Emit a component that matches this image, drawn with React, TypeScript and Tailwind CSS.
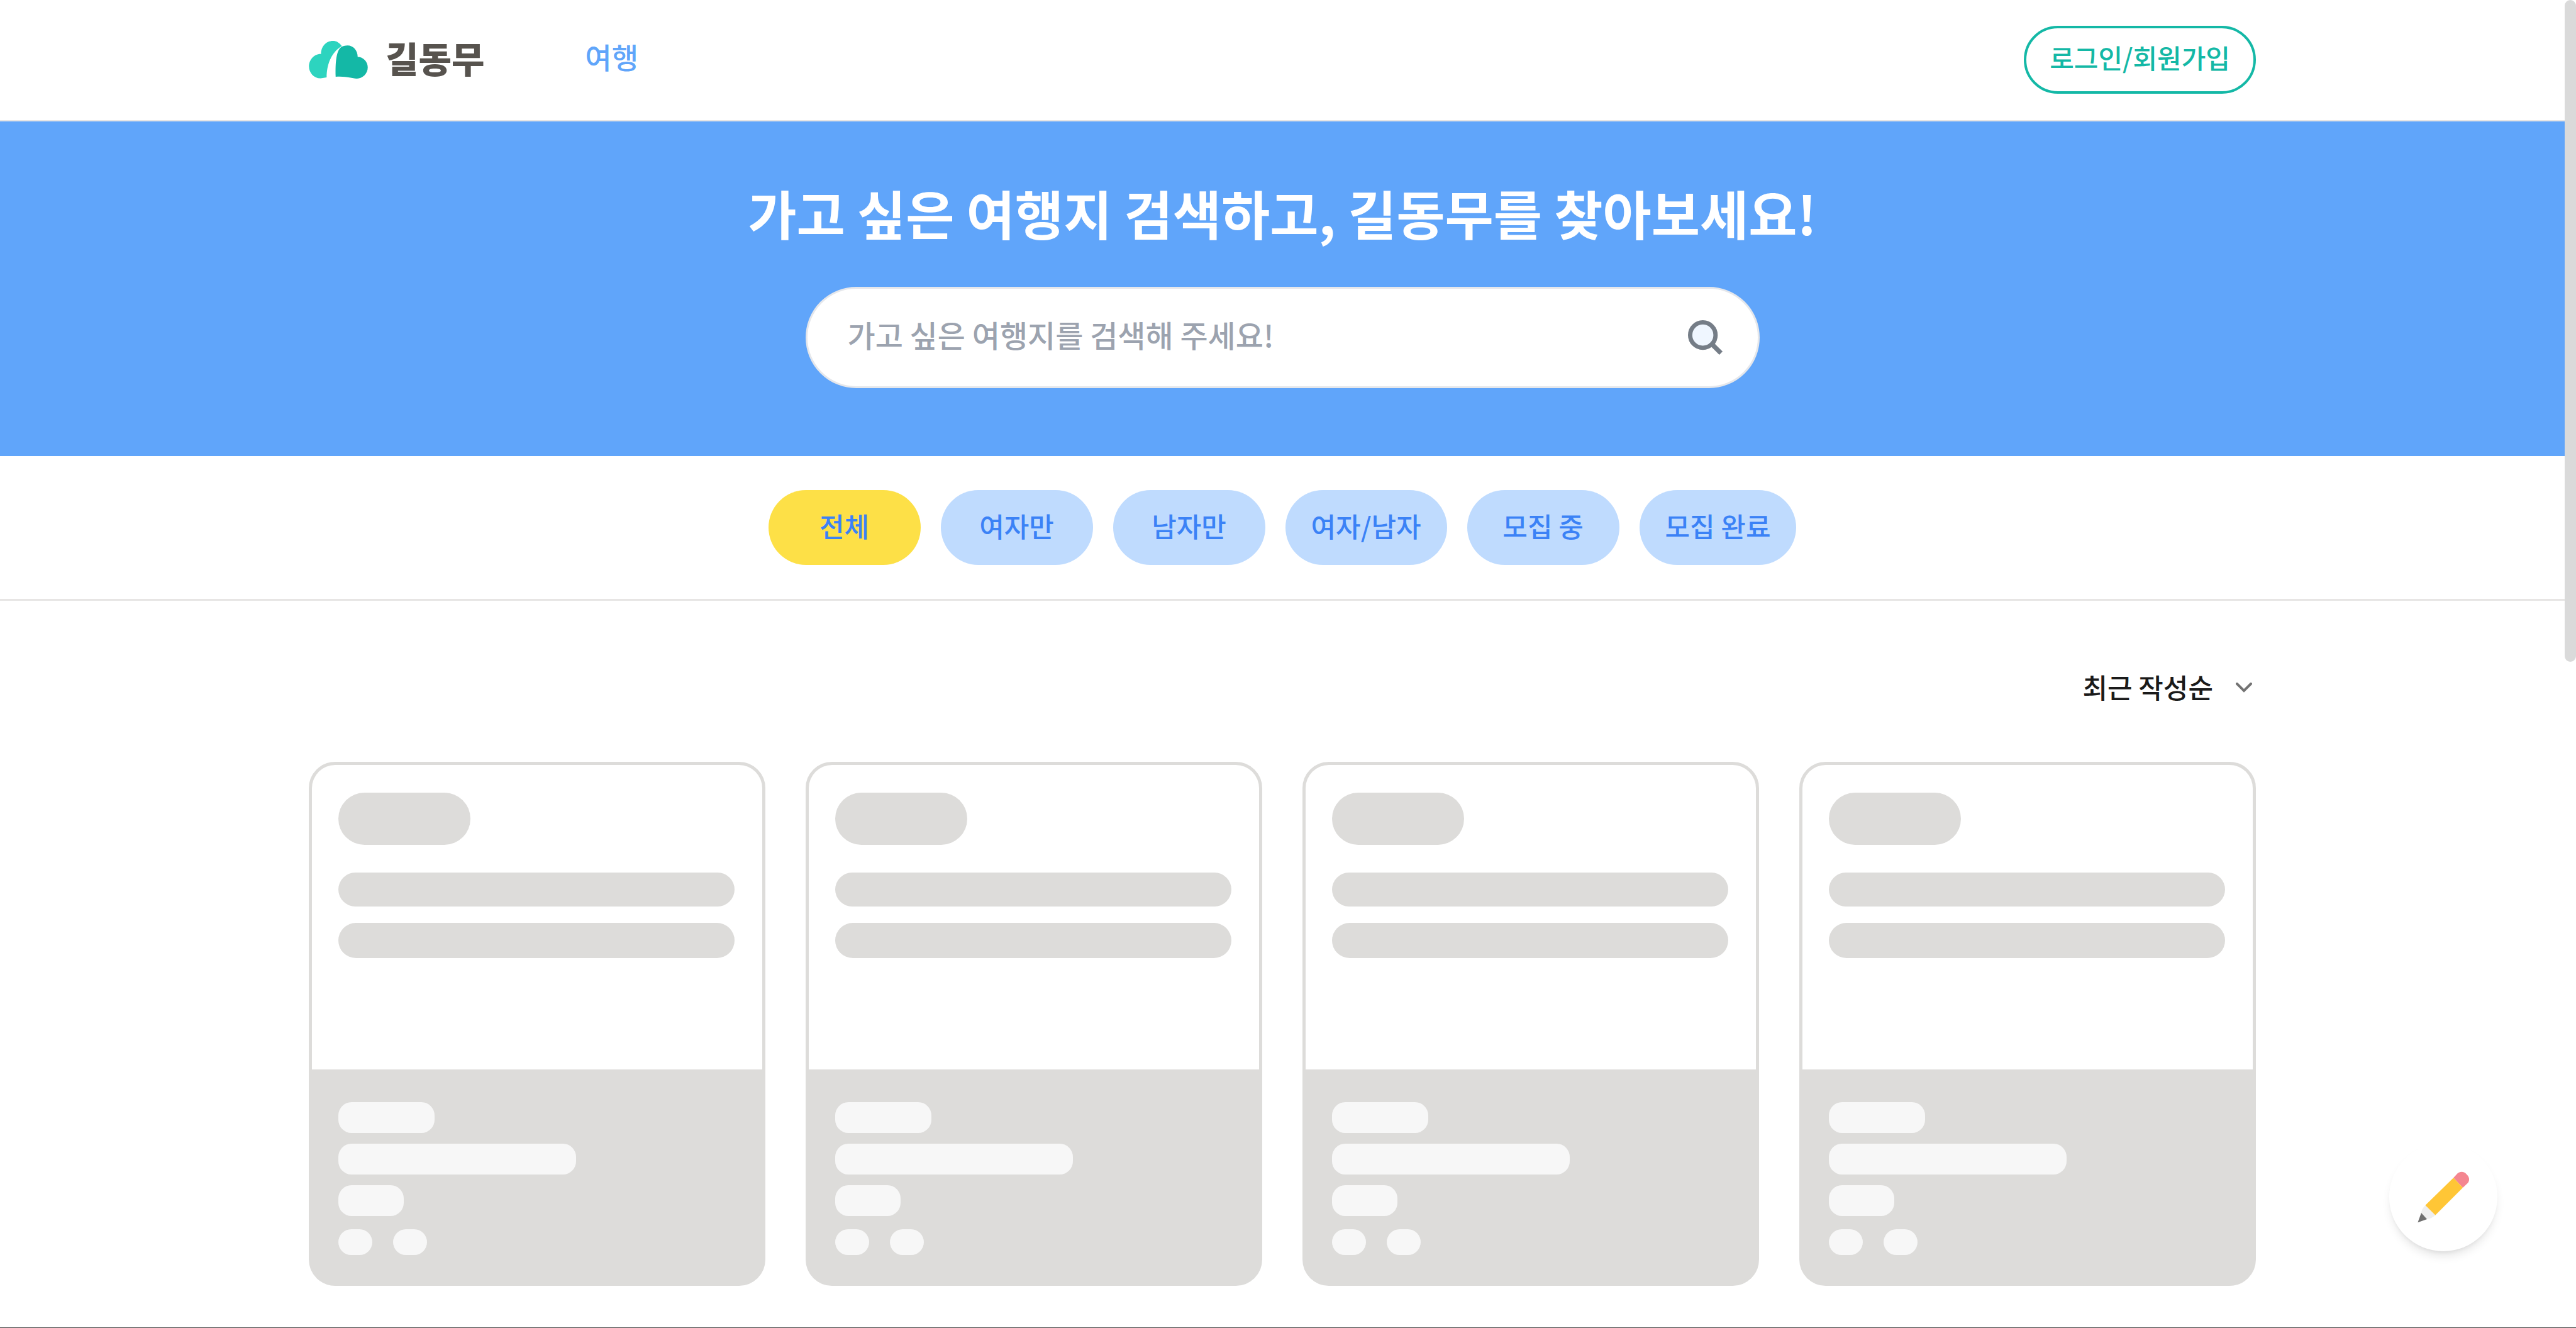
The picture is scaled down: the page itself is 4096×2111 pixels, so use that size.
const font = "font-['Noto_Sans_CJK_KR',sans-serif]";

function Logo() {
  return (
    <a href="#" className="flex items-center gap-7" aria-label="길동무">
      <svg viewBox="0 0 438 281" className="h-[60px] w-[94px]" aria-hidden="true">
        <path
          d="M245 39C225 12 205 0 178 0C130 0 90 40 90 97C40 95 0 140 0 190C0 240 40 281 88 279L132 272C132 180 165 85 245 39Z"
          fill="#2dd4bf"
        />
        <path
          d="M199 267C196 150 205 80 235 50C250 38 270 34 288 34C330 34 363 72 363 119C405 119 438 155 438 197C438 245 400 280 357 281C315 280 285 262 199 267Z"
          fill="#14b8a6"
        />
      </svg>
      <span className="pb-2 text-[57px] leading-[72px] font-black text-[#57534e]">길동무</span>
    </a>
  );
}

function Header() {
  return (
    <header className="border-b-2 border-[#e7e5e4] bg-white">
      <div className="mx-auto flex h-[191px] w-[3096px] max-w-full items-center justify-between pb-[2px]">
        <div className="flex items-center gap-40">
          <Logo />
          <nav className="pb-3">
            <a href="#" className="text-[46px] leading-[64px] font-medium text-[#60a5fa]">여행</a>
          </nav>
        </div>
        <button className="rounded-full border-4 border-[#14b8a6] px-[37px] pt-3 pb-5 text-[42px] leading-[68px] font-medium text-[#14b8a6]">
          로그인/회원가입
        </button>
      </div>
    </header>
  );
}

function Hero() {
  return (
    <section className="flex flex-col items-center gap-14 bg-[#60a5fa] pt-[83px] pb-[108px]">
      <h1 className="text-[84px] leading-[124px] font-bold whitespace-nowrap text-white">
        가고 싶은 여행지 검색하고, 길동무를 찾아보세요!
      </h1>
      <form className="flex h-[161px] w-[1517px] max-w-full items-center rounded-full border-[3px] border-[#e5e7eb] bg-white pr-[56px] pl-16">
        <input
          type="text"
          aria-label="여행지 검색"
          placeholder="가고 싶은 여행지를 검색해 주세요!"
          className="min-w-0 flex-1 pb-3 text-[48px] leading-[72px] font-medium outline-none placeholder:text-[#9ca3af]"
        />
        <button type="button" aria-label="검색">
          <svg viewBox="0 0 256 256" className="size-[55px]" aria-hidden="true">
            <path d="M175 175L244 244" stroke="#757d87" strokeWidth="34" />
            <circle cx="110" cy="110" r="94" fill="#eff6ff" stroke="#757d87" strokeWidth="32" />
          </svg>
        </button>
      </form>
    </section>
  );
}

const filters = ["전체", "여자만", "남자만", "여자/남자", "모집 중", "모집 완료"];

function Filters() {
  return (
    <div className="flex justify-center gap-8 border-b-[3px] border-[#e7e5e4] py-[54px]">
      {filters.map((name, i) => (
        <button
          key={name}
          className={
            "h-[119px] min-w-[242px] rounded-full px-[41px] pb-2 text-[43px] leading-[64px] font-medium whitespace-nowrap text-[#3b82f6] " +
            (i === 0 ? "bg-[#fde047]" : "bg-[#bfdbfe]")
          }
        >
          {name}
        </button>
      ))}
    </div>
  );
}

function SkeletonCard() {
  return (
    <li className="overflow-hidden rounded-[42px] border-[5px] border-[#dddcda] bg-[#dddcda]">
      <div className="flex h-[484px] flex-col bg-white pt-[44px] pr-11 pl-[42px]">
        <div className="h-[83px] w-[210px] rounded-full bg-[#dddcda]" />
        <div className="mt-11 h-[54px] rounded-full bg-[#dddcda]" />
        <div className="mt-[26px] h-[56px] rounded-full bg-[#dddcda]" />
      </div>
      <div className="flex flex-col gap-[17px] px-[42px] pt-[52px] pb-11">
        <div className="h-[49px] w-[153px] rounded-[21px] bg-[#f7f7f7]" />
        <div className="h-[49px] w-[378px] rounded-[21px] bg-[#f7f7f7]" />
        <div className="h-[49px] w-[104px] rounded-[21px] bg-[#f7f7f7]" />
        <div className="flex gap-[33px] pt-1">
          <div className="h-[41px] w-[54px] rounded-[21px] bg-[#f7f7f7]" />
          <div className="h-[41px] w-[54px] rounded-[21px] bg-[#f7f7f7]" />
        </div>
      </div>
    </li>
  );
}

function PencilIcon() {
  return (
    <svg viewBox="0 0 386 386" className="size-[82px]" aria-hidden="true">
      <path d="M269 48L294 21C312 -1 345 -1 362 16L373 28C390 45 391 73 374 90L339 122Z" fill="#f48690" />
      <path d="M58 254L269 48L339 122L133 328Z" fill="#ffc636" />
      <path d="M58 254C36 276 30 295 28 311L71 358C96 354 113 346 133 328Z" fill="#efefef" />
      <path d="M28 311L71 358L2 383Z" fill="#707070" />
    </svg>
  );
}

export default function App() {
  return (
    <div className={"relative min-h-screen overflow-hidden border-b border-[#444444] bg-white pr-[18px] text-[#1a1a1a] " + font}>
      <Header />
      <Hero />
      <Filters />
      <main className="mx-auto w-[3096px] max-w-full pt-[104px]">
        <div className="flex justify-end">
          <button className="flex items-center gap-9 pr-[6px] text-[43px] leading-[64px] font-medium">
            최근 작성순
            <svg viewBox="0 0 26 16" className="mt-1 h-4 w-[26px]" fill="none" aria-hidden="true">
              <path d="M2 2L13 13L24 2" stroke="#737373" strokeWidth="4" strokeLinecap="round" />
            </svg>
          </button>
        </div>
        <ul className="mt-[88px] grid grid-cols-4 gap-16">
          <SkeletonCard />
          <SkeletonCard />
          <SkeletonCard />
          <SkeletonCard />
        </ul>
      </main>
      <button
        aria-label="글쓰기"
        className="fixed right-[125px] bottom-[122px] flex size-[172px] items-center justify-center rounded-full bg-white shadow-[0_10px_15px_-3px_rgba(0,0,0,0.1),0_5px_10px_-5px_rgba(0,0,0,0.1)]"
      >
        <PencilIcon />
      </button>
      <div className="fixed top-0 right-0 h-[1052px] w-[18px] rounded-full bg-[#dadada]" />
    </div>
  );
}
